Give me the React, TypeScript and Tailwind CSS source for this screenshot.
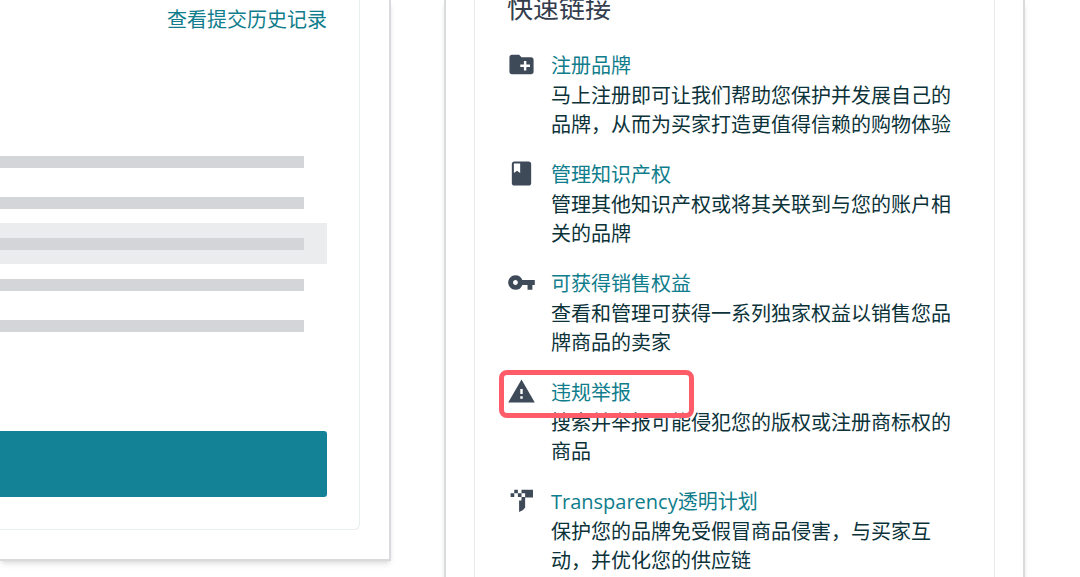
import React from "react";
import { MdCreateNewFolder, MdVpnKey, MdWarning } from "react-icons/md";

const BookIcon = () => (
  <svg viewBox="0 0 24 24" className="size-[29px]" fill="currentColor">
    <path
      fillRule="evenodd"
      d="M18 2H6c-1.1 0-2 .9-2 2v16c0 1.1.9 2 2 2h12c1.1 0 2-.9 2-2V4c0-1.1-.9-2-2-2zM5.700 3.700h5.200v7.800l-2.600-1.700-2.600 1.700z"
    />
  </svg>
);

const TransparencyIcon = () => (
  <svg viewBox="0 0 24 24" className="size-[29px]" fill="currentColor">
    <path d="M6 3h3v3H6zM3 6h3v3H3zM9 6h3v3H9zM12 3h9.500v6.500H15V6h-3zM12 9h3v9l-2 2-3 1.500V12h2z" />
  </svg>
);

const quickLinks = [
  {
    icon: <MdCreateNewFolder className="size-[29px]" />,
    title: "注册品牌",
    text: "马上注册即可让我们帮助您保护并发展自己的品牌，从而为买家打造更值得信赖的购物体验",
  },
  {
    icon: <BookIcon />,
    title: "管理知识产权",
    text: "管理其他知识产权或将其关联到与您的账户相关的品牌",
  },
  {
    icon: <MdVpnKey className="size-[29px]" />,
    title: "可获得销售权益",
    text: "查看和管理可获得一系列独家权益以销售您品牌商品的卖家",
  },
  {
    icon: <MdWarning className="size-[29px]" />,
    title: "违规举报",
    text: "搜索并举报可能侵犯您的版权或注册商标权的商品",
    highlighted: true,
  },
  {
    icon: <TransparencyIcon />,
    title: "Transparency透明计划",
    text: "保护您的品牌免受假冒商品侵害，与买家互动，并优化您的供应链",
  },
];

const placeholderRows = [false, false, true, false, false];

const SubmissionsCard = () => {
  return (
    <section className="border-r-2 border-b-2 border-[#d9dadd] pr-[29px] pb-[29px] shadow-md">
      <div className="rounded-br-md border-r border-b border-[#e9eeee] pr-8 pb-8">
        <div className="flex justify-end pt-[5px]">
          <a href="#" className="text-[20px] leading-[30px] text-[#0f7d8c]">
            查看提交历史记录
          </a>
        </div>

        <div className="mt-[106px]">
          {placeholderRows.map((active, i) => (
            <div
              key={i}
              className={`flex h-[41px] items-center pr-[23px] ${
                active ? "bg-[#ebecee]" : ""
              }`}
            >
              <div className="h-3 w-full bg-[#d4d5d9]" />
            </div>
          ))}
        </div>

        <button
          type="button"
          aria-label="提交"
          className="mt-[85px] block h-[66px] w-full rounded-r-[3px] bg-[#148296]"
        />
      </div>
    </section>
  );
};

const QuickLinksCard = () => {
  return (
    <section className="border-x-2 border-[#d9dcdd] px-7 shadow-md">
      <div className="border-x border-[#e9ebec] px-8 pb-10">
        <h2 className="-mt-2.5 text-[26px] leading-9 text-[#333d4d]">
          快速链接
        </h2>

        <ul className="mt-6 flex flex-col gap-5">
          {quickLinks.map((link) => (
            <li key={link.title} className="relative flex gap-[15px]">
              <span className="shrink-0 text-[#3f4a59]">{link.icon}</span>
              <div>
                <a
                  href="#"
                  className="block text-[20px] leading-[31px] text-[#0f7d8c]"
                >
                  {link.title}
                </a>
                <p className="text-[20px] leading-[29px] text-[#0b3239]">
                  {link.text}
                </p>
              </div>
              {link.highlighted && (
                <span className="pointer-events-none absolute -top-[7px] -left-2 h-12 w-[195px] rounded-lg border-5 border-[#ff5c6a]" />
              )}
            </li>
          ))}
        </ul>
      </div>
    </section>
  );
};

const App = () => {
  return (
    <main className="grid h-screen grid-cols-[391fr_581fr] items-start gap-[53px] overflow-hidden bg-white pr-[55px] font-['Open_Sans','Noto_Sans_CJK_SC',sans-serif]">
      <SubmissionsCard />
      <QuickLinksCard />
    </main>
  );
};

export default App;
